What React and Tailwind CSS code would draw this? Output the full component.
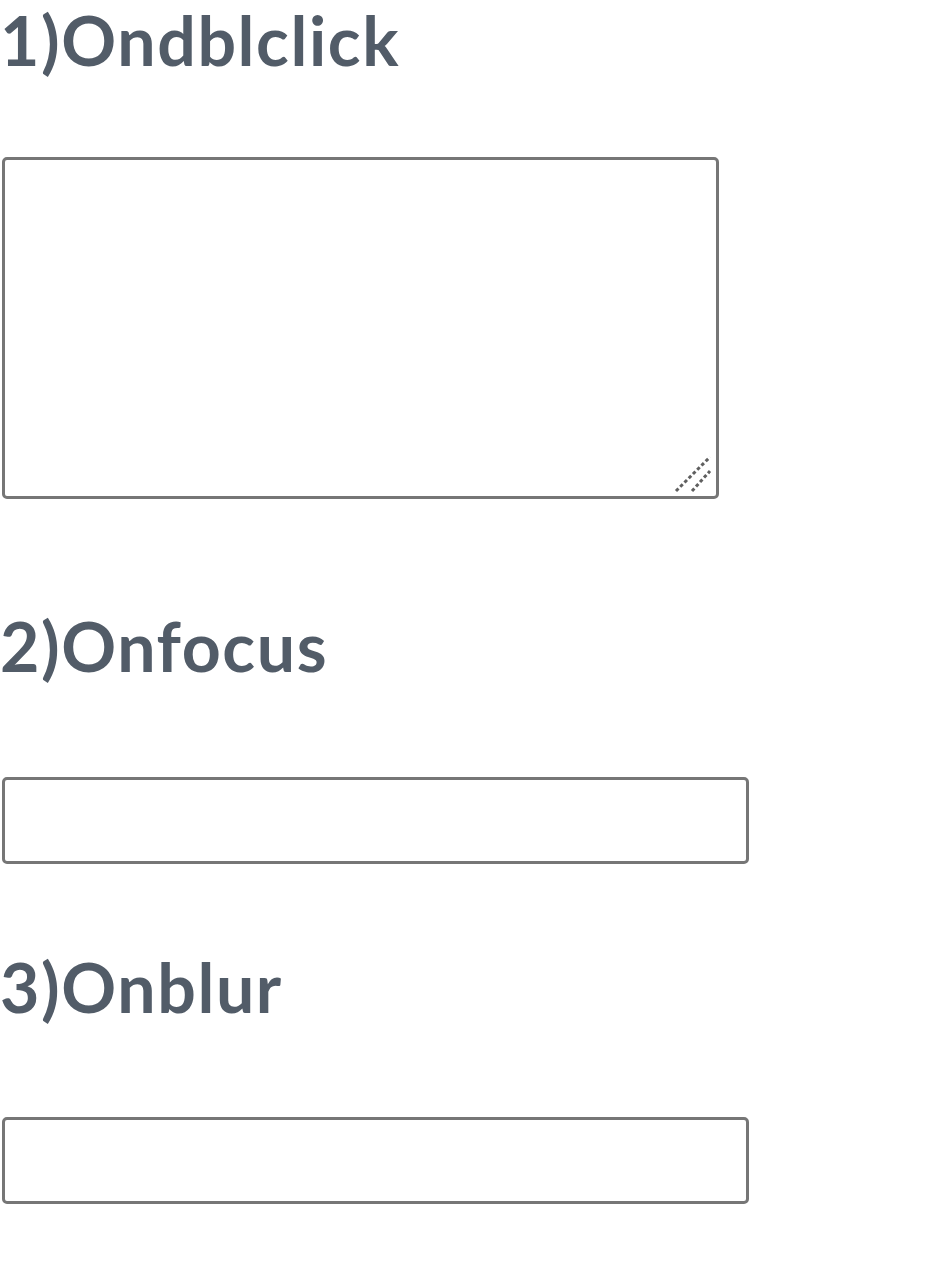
export default function App() {
  const heading = 'block font-bold text-[68px] leading-none text-[#525c68] tracking-[1.6px]'
  return (
    <div className="min-h-screen bg-white font-['Lato','Open_Sans',sans-serif]">
      <div className="flex flex-col items-start">
        <label className={`${heading} mt-[6px]`}>1)Ondblclick</label>

        <div className="relative mt-[83px] ml-[2px]">
          <textarea className="block w-[717px] h-[342px] border-[3px] border-[#767676] rounded-[5px] bg-white resize-none outline-none" />
          <svg className="absolute right-[6px] bottom-[6px]" width="40" height="40" viewBox="0 0 40 40">
            <path d="M3 38 L37 4" stroke="#5f5f5f" strokeWidth="3" strokeDasharray="3.5 2.5" />
            <path d="M19 38 L37 18" stroke="#5f5f5f" strokeWidth="3" strokeDasharray="3.5 2.5" />
          </svg>
        </div>

        <label className={`${heading} mt-[113px]`}>2)Onfocus</label>
        <input type="text" className="block mt-[97px] ml-[2px] w-[747px] h-[87px] border-[3px] border-[#767676] rounded-[5px] bg-white outline-none" />

        <label className={`${heading} mt-[89px]`}>3)Onblur</label>
        <input type="text" className="block mt-[96px] ml-[2px] w-[747px] h-[87px] border-[3px] border-[#767676] rounded-[5px] bg-white outline-none" />
      </div>
    </div>
  )
}
